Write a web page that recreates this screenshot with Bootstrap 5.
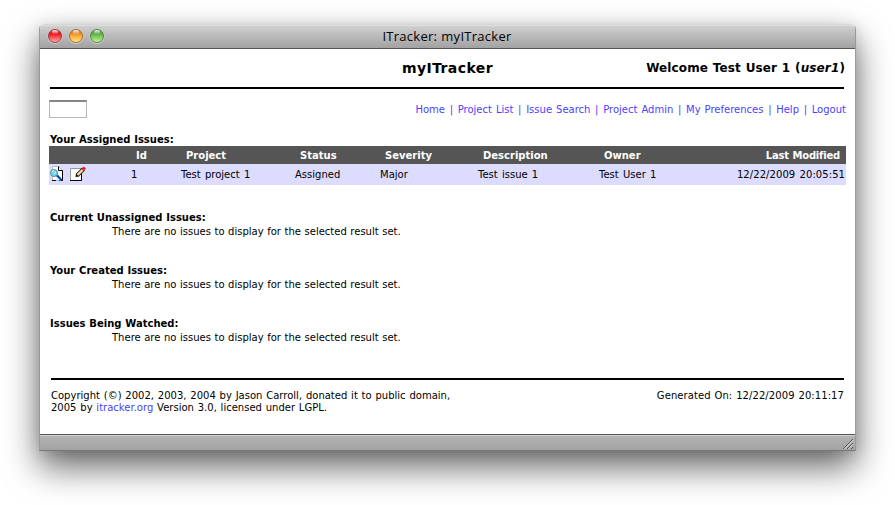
<!DOCTYPE html>
<html lang="en">
<head>
<meta charset="utf-8">
<title>ITracker: myITracker</title>
<link href="https://cdn.jsdelivr.net/npm/bootstrap@5.3.0/dist/css/bootstrap.min.css" rel="stylesheet">
<style>
body{background:#fff;color:#000;font:10px/12px Verdana,"DejaVu Sans",sans-serif;overflow:hidden;height:505px;letter-spacing:.01px;word-spacing:.35px}
a{color:#4a42ff;text-decoration:none}
.mac-window{width:817px;height:427px;margin:24px 0 0 39px;border:1px solid #9a9a9a;border-top-color:#d6d6d6;border-bottom-color:#777;border-radius:5px 5px 0 0;box-shadow:0 16px 34px rgba(0,0,0,.6),0 2px 14px rgba(0,0,0,.1)}
.titlebar{height:24px;background:linear-gradient(#cfcfcf,#a2a2a2);border-top:1px solid #dedede;border-bottom:1px solid #555;border-radius:4px 4px 0 0;padding:0 0 2px 7px}
.titlebar .caption{font:13px/20px "Open Sans",sans-serif;letter-spacing:.27px;padding-right:66px}
.lights{width:58px}
.page-body{height:385px;padding:0 9px}
.masthead{height:40px;margin:0 2px 0 1px;border-bottom:2px solid #000;display:grid;grid-template-columns:1fr auto 1fr;line-height:38px}
.masthead .heading{font-size:14px;letter-spacing:.4px;padding-left:1px}
.masthead .welcome{font-size:12px;letter-spacing:.13px;word-spacing:.4px;margin-right:-1px}
.toolbar-row{height:40px}
.search-box{width:38px;height:18px;border:1px solid #b8b8b8;border-top:2px solid #858585;border-radius:0;outline:0}
.crumbs{color:#4a42ff;word-spacing:1.45px;padding-top:2px}
.crumbs a{word-spacing:.8px}
.section-title{font-weight:700;line-height:14px;margin:0;padding-left:1px;font-size:10px;letter-spacing:0}
.first-title{padding-top:4px;height:17px}
.empty-note{padding-left:63px;line-height:14px;height:39px}
.issues{width:797px;table-layout:fixed;margin:0 0 26px;border-collapse:collapse}
.issues th{background:#555;color:#fff;height:18px;padding:2px 6px 0 5px;letter-spacing:0}
.issues th:last-child{letter-spacing:-.2px}
.issues td{background:#dcdcff;height:21px;padding:0;word-spacing:1px}
.issues td:last-child{letter-spacing:.07px;padding-right:1px}
.issue-tools{padding-bottom:2px}
.foot{border-top:2px solid #000;margin:8px 2px 0;padding-top:10px;word-spacing:.6px}
.stamp{letter-spacing:.08px}
.statusbar{height:17px;background:linear-gradient(#b4b4b4,#a2a2a2);border-top:1px solid #555;box-shadow:inset 0 1px #d0d0d0}
</style>
<script src="https://cdn.jsdelivr.net/npm/bootstrap@5.3.0/dist/js/bootstrap.bundle.min.js"></script>
</head>
<body>
<main class="mac-window d-flex flex-column">
  <header class="titlebar d-flex align-items-center flex-shrink-0">
    <svg class="lights flex-shrink-0" width="58" height="16" viewBox="0 0 58 16">
      <defs>
        <linearGradient id="r" x2="0" y2="1"><stop stop-color="#a52028"/><stop offset=".35" stop-color="#f51520"/><stop offset="1" stop-color="#ffb5b5"/></linearGradient>
        <linearGradient id="y" x2="0" y2="1"><stop stop-color="#b06018"/><stop offset=".4" stop-color="#f89c2c"/><stop offset="1" stop-color="#fff08a"/></linearGradient>
        <linearGradient id="g" x2="0" y2="1"><stop stop-color="#3c7a2c"/><stop offset=".4" stop-color="#64b848"/><stop offset="1" stop-color="#ccf8a4"/></linearGradient>
        <linearGradient id="s" x2="0" y2="1"><stop stop-color="#fff" stop-opacity=".95"/><stop offset="1" stop-color="#fff" stop-opacity=".1"/></linearGradient>
      </defs>
      <g fill="none" stroke="#ddd" stroke-opacity=".7"><circle cx="8" cy="8.6" r="7"/><circle cx="29" cy="8.6" r="7"/><circle cx="50" cy="8.6" r="7"/></g>
      <circle cx="8" cy="8" r="6.5" fill="url(#r)" stroke="#a03a3e"/>
      <circle cx="29" cy="8" r="6.5" fill="url(#y)" stroke="#a86c34"/>
      <circle cx="50" cy="8" r="6.5" fill="url(#g)" stroke="#508a44"/>
      <g fill="url(#s)"><ellipse cx="8" cy="4" rx="3.3" ry="2"/><ellipse cx="29" cy="4" rx="3.3" ry="2"/><ellipse cx="50" cy="4" rx="3.3" ry="2"/></g>
    </svg>
    <div class="caption flex-grow-1 text-center"><span>ITracker: myITracker</span></div>
  </header>

  <div class="page-body flex-shrink-0">
    <div class="masthead">
      <span></span>
      <span class="heading fw-bold">myITracker</span>
      <span class="welcome fw-bold text-end">Welcome Test User 1 (<em>user1</em>)</span>
    </div>
    <div class="toolbar-row d-flex justify-content-between align-items-center">
      <input class="search-box" aria-label="Issue">
      <nav class="crumbs"><a href="#">Home</a> | <a href="#">Project List</a> | <a href="#">Issue Search</a> | <a href="#">Project Admin</a> | <a href="#">My Preferences</a> | <a href="#">Help</a> | <a href="#">Logout</a></nav>
    </div>

    <h2 class="section-title first-title">Your Assigned Issues:</h2>
    <table class="issues">
      <colgroup><col style="width:82px"><col style="width:50px"><col style="width:114px"><col style="width:85px"><col style="width:98px"><col style="width:121px"><col style="width:100px"><col></colgroup>
      <tr><th></th><th>Id</th><th>Project</th><th>Status</th><th>Severity</th><th>Description</th><th>Owner</th><th class="text-end">Last Modified</th></tr>
      <tr>
        <td><div class="issue-tools d-flex gap-1">
          <svg width="16" height="16" viewBox="0 0 16 16">
            <path d="M3.500 .5h6l4 4v10h-10z" fill="#fff" stroke="#bbb"/><path d="M9.500 .5v4h4v10h-3M3 14.500h4" fill="none" stroke="#000"/>
            <circle cx="5" cy="7" r="3.500" fill="#5ce4f2" stroke="#77a"/><path d="M3 6l2-2M5 8l2-2" stroke="#fff"/>
            <path d="M8 9.500l4.500 5" stroke="#0a3e9c" stroke-width="2.600"/><path d="M7.500 10.500l4 4" stroke="#38c4f8"/>
          </svg>
          <svg width="18" height="16" viewBox="0 0 18 16">
            <path d="M1.500 2.500h11v12h-11z" fill="#fff" stroke="#999"/><path d="M12.500 8v6.500H1" fill="none" stroke="#000"/>
            <path d="M8 9.500L14.500 3" stroke="#222" stroke-width="4"/><path d="M8.500 9L14 3.500" stroke="#f7d79a" stroke-width="2.400"/><path d="M13.500 4L16 1.500" stroke="#d8281c" stroke-width="3"/><path d="M6.500 11l.5-3 2.500 2.500z"/>
          </svg>
        </div></td>
        <td>1</td><td>Test project 1</td><td>Assigned</td><td>Major</td><td>Test issue 1</td><td>Test User 1</td><td class="text-end">12/22/2009 20:05:51</td>
      </tr>
    </table>

    <h2 class="section-title">Current Unassigned Issues:</h2>
    <div class="empty-note">There are no issues to display for the selected result set.</div>
    <h2 class="section-title">Your Created Issues:</h2>
    <div class="empty-note">There are no issues to display for the selected result set.</div>
    <h2 class="section-title">Issues Being Watched:</h2>
    <div class="empty-note">There are no issues to display for the selected result set.</div>

    <footer class="foot d-flex justify-content-between">
      <div>Copyright (©) 2002, 2003, 2004 by Jason Carroll, donated it to public domain,<br>2005 by <a href="#">itracker.org</a> Version 3.0, licensed under LGPL.</div>
      <div class="stamp">Generated On: 12/22/2009 20:11:17</div>
    </footer>
  </div>

  <div class="statusbar d-flex justify-content-end align-items-end">
    <svg width="13" height="13" viewBox="0 0 13 13"><path d="M1 12L11 2M5 12l6-6M9 12l2-2" stroke="#555"/><path d="M2.200 12.200l9-9M6.200 12.200l5-5" stroke="#ddd"/></svg>
  </div>
</main>
</body>
</html>
